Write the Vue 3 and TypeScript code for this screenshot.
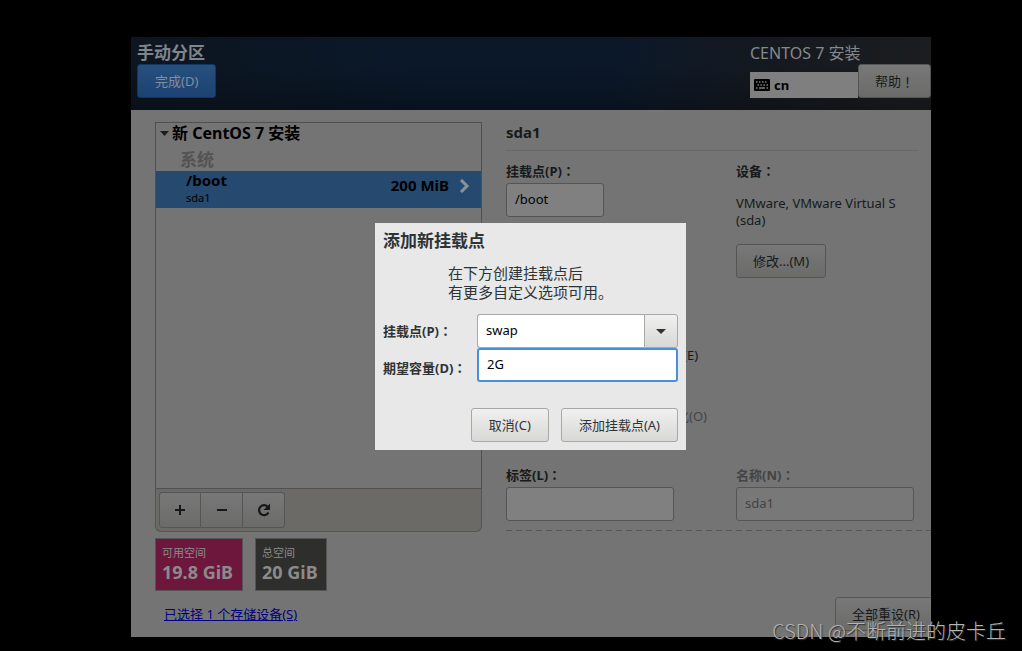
<script setup lang="ts">
import { ref } from 'vue'

const mountPoint = ref('/boot')
const capacity = ref('200 MiB')
const label = ref('')
const deviceName = ref('sda1')
const newMount = ref('swap')
const newSize = ref('2G')

const spaces = [
  { title: '可用空间', value: '19.8 GiB', kind: 'free' },
  { title: '总空间', value: '20 GiB', kind: 'total' },
]
</script>

<template>
  <div class="screen">
    <main class="installer">
      <header class="top">
        <div class="top-left">
          <h1>手动分区</h1>
          <button class="done" type="button">完成(D)</button>
        </div>
        <div class="top-right">
          <div class="product">CENTOS 7 安装</div>
          <div class="top-tools">
            <div class="keyboard">
              <svg width="16" height="12" viewBox="0 0 16 12" aria-hidden="true">
                <rect width="16" height="12" rx="1" fill="#000" />
                <path d="M2 3h1.500M5 3h1.500M8 3h1.500M11 3h1.500M3.500 6h1.500M6.500 6h1.500M9.500 6h1.500M12.500 6h1.500M2 9h1.500M5 9h6M12.500 9h1.500" stroke="#7f7f7f" stroke-width="1.500" />
              </svg>
              <span>cn</span>
            </div>
            <button class="btn help" type="button">帮助<span class="mark">！</span></button>
          </div>
        </div>
      </header>

      <div class="body">
        <section class="left">
          <div class="tree">
            <div class="root">
              <svg width="9" height="5" viewBox="0 0 9 5" aria-hidden="true"><path d="M0 0h9L4.500 5z" fill="#1b1e1f" /></svg>
              <span>新 CentOS 7 安装</span>
            </div>
            <div class="group">系统</div>
            <div class="item">
              <div class="item-name">
                <strong>/boot</strong>
                <small>sda1</small>
              </div>
              <strong class="size">200 MiB</strong>
              <svg width="11" height="14" viewBox="0 0 11 14" aria-hidden="true"><path d="M2 1l6 6-6 6" fill="none" stroke="#8a9299" stroke-width="3" /></svg>
            </div>
          </div>
          <div class="toolbar">
            <button class="btn tool" type="button" aria-label="添加">
              <svg width="16" height="16" viewBox="0 0 16 16"><path d="M8 3v10M3 8h10" stroke="#15191a" stroke-width="2" /></svg>
            </button>
            <button class="btn tool" type="button" aria-label="删除">
              <svg width="16" height="16" viewBox="0 0 16 16"><path d="M3 8h10" stroke="#15191a" stroke-width="2" /></svg>
            </button>
            <button class="btn tool" type="button" aria-label="刷新">
              <svg width="16" height="16" viewBox="0 0 16 16"><path d="M11.500 4.500A5 5 0 1 0 12.500 10.500" fill="none" stroke="#15191a" stroke-width="2.200" /><path d="M14 1.500V8H7.500z" fill="#15191a" /></svg>
            </button>
          </div>
          <div class="spaces">
            <div v-for="s in spaces" :key="s.kind" class="space" :class="s.kind">
              <span>{{ s.title }}</span>
              <strong>{{ s.value }}</strong>
            </div>
          </div>
          <a class="devices" href="#">已选择 1 个存储设备(S)</a>
        </section>

        <section class="right">
          <h2>sda1</h2>
          <div class="columns">
            <div class="stack">
              <div class="field">
                <label for="mount">挂载点(P)<span class="mark">：</span></label>
                <input id="mount" v-model="mountPoint" class="short" type="text" />
              </div>
              <div class="field">
                <label for="capacity">期望容量(D)<span class="mark">：</span></label>
                <input id="capacity" v-model="capacity" class="short" type="text" />
              </div>
            </div>
            <div class="device">
              <div class="caption">设备<span class="mark">：</span></div>
              <p>VMware, VMware Virtual S<br />(sda)</p>
              <button class="btn modify" type="button">修改...(M)</button>
            </div>
          </div>
          <div class="stack types">
            <div class="field">
              <label for="type">设备类型(T)<span class="mark">：</span></label>
              <div class="line">
                <select id="type" class="type"><option>标准分区</option></select>
                <label class="check"><input type="checkbox" />加密(E)</label>
              </div>
            </div>
            <div class="field">
              <label for="fs">文件系统(Y)<span class="mark">：</span></label>
              <div class="line">
                <select id="fs" class="fs"><option>xfs</option></select>
                <label class="check off"><input type="checkbox" disabled />重新格式化(O)</label>
              </div>
            </div>
          </div>
          <div class="columns names">
            <div class="field">
              <label for="label">标签(L)<span class="mark">：</span></label>
              <input id="label" v-model="label" class="wide" type="text" />
            </div>
            <div class="field off">
              <label for="name">名称(N)<span class="mark">：</span></label>
              <input id="name" v-model="deviceName" class="name" type="text" disabled />
            </div>
          </div>
          <svg class="dashes" height="1" aria-hidden="true"><line x1="0" y1="0.500" x2="100%" y2="0.500" stroke="#565656" stroke-dasharray="6 4" /></svg>
          <button class="btn reset" type="button">全部重设(R)</button>
        </section>
      </div>

      <div class="overlay">
        <form class="dialog" role="dialog" aria-labelledby="dialog-title" @submit.prevent>
          <h2 id="dialog-title">添加新挂载点</h2>
          <p>在下方创建挂载点后<br />有更多自定义选项可用。</p>
          <div class="form">
            <label for="new-mount">挂载点(P)<span class="mark">：</span></label>
            <div class="combo">
              <input id="new-mount" v-model="newMount" type="text" />
              <button class="btn arrow" type="button" aria-label="展开">
                <svg width="10" height="5" viewBox="0 0 10 5"><path d="M0 0h10L5 5z" fill="#2e3436" /></svg>
              </button>
            </div>
            <label class="second" for="new-size">期望容量(D)<span class="mark">：</span></label>
            <input id="new-size" v-model="newSize" class="active" type="text" />
          </div>
          <div class="actions">
            <button class="btn" type="button">取消(C)</button>
            <button class="btn" type="submit">添加挂载点(A)</button>
          </div>
        </form>
      </div>
    </main>
    <div class="watermark">CSDN @不断前进的皮卡丘</div>
  </div>
</template>

<style>
body {
  background: #000;
}
</style>

<style scoped>
.screen,
.screen * {
  box-sizing: border-box;
}
.screen {
  display: flex;
  min-height: 100vh;
  padding: 37px 91px 14px 131px;
  background: #000;
  color: #171a1b;
  font: 13px/17px "Noto Sans", "Noto Sans CJK SC", sans-serif;
}
.mark {
  font-family: "Noto Sans CJK TC", sans-serif;
  line-height: 1;
}
h1,
h2,
p {
  margin: 0;
}
h1,
h2 {
  font-size: 17px;
  line-height: 24px;
}
button,
input,
select {
  font: inherit;
  color: inherit;
  margin: 0;
}
svg {
  display: block;
  flex: none;
}
.installer {
  position: relative;
  display: flex;
  flex: 1;
  flex-direction: column;
  min-width: 0;
  overflow: hidden;
  background: #747474;
}
.top {
  display: flex;
  justify-content: space-between;
  padding: 3px 0 12px 6px;
  background: linear-gradient(to bottom, transparent 40%, #00000040), linear-gradient(to right, #0d1520, #0a1829 35%, #0b182a 60%, #15191f 80%, #1b1d1f);
}
.top h1 {
  padding-top: 2px;
  color: #80858b;
  line-height: 22px;
}
.done {
  height: 34px;
  padding: 0 17px;
  border: 1px solid #123861;
  border-radius: 3px;
  background: linear-gradient(#28507f, #1b4272);
  color: #858e98;
}
.top-right {
  width: 181px;
}
.product {
  color: #85888b;
  font-size: 16px;
  line-height: 24px;
  padding-top: 1px;
}
.top-tools {
  display: flex;
  align-items: flex-end;
  margin-top: -1px;
}
.keyboard {
  display: flex;
  flex: 1;
  align-items: center;
  gap: 4px;
  height: 26px;
  padding: 0 4px;
  background: #7f7f7f;
  color: #000;
  font-weight: bold;
}
.btn {
  display: flex;
  align-items: center;
  justify-content: center;
  height: 34px;
  padding: 0 16px;
  border: 1px solid #555;
  border-radius: 3px;
  background: linear-gradient(#787878, #6b6b6a);
  white-space: nowrap;
}
.help {
  width: 73px;
}
.body {
  display: grid;
  flex: 1;
  grid-template-columns: 327fr 425fr;
  gap: 24px;
  padding: 12px 0 6px 24px;
}
.left,
.right {
  display: flex;
  flex-direction: column;
  min-width: 0;
}
.tree {
  flex: 1;
  border: 1px solid #505050;
  background: #747474;
  color: #000;
}
.root {
  display: flex;
  align-items: center;
  gap: 3px;
  height: 20px;
  padding-left: 4px;
  font-size: 16px;
  font-weight: bold;
}
.group {
  height: 28px;
  padding-left: 24px;
  color: #535353;
  font-size: 17px;
  font-weight: bold;
  line-height: 34px;
}
.item {
  display: flex;
  align-items: flex-start;
  height: 37px;
  padding: 1px 11px 0 30px;
  background: #25496f;
}
.item svg {
  margin-top: 7px;
}
.item strong {
  font-size: 15px;
}
.item-name {
  display: flex;
  flex: 1;
  flex-direction: column;
}
.item small {
  font-size: 11px;
}
.item .size {
  line-height: 26px;
  margin-right: 10px;
}
.toolbar {
  display: flex;
  height: 43px;
  padding: 3px;
  border: 1px solid #555;
  border-top: 0;
  border-radius: 0 0 6px 6px;
  background: #6b6a67;
}
.tool {
  width: 42px;
  height: 36px;
  padding: 0;
  border-radius: 0;
}
.tool + .tool {
  border-left: 0;
}
.tool:first-child {
  border-radius: 3px 0 0 3px;
}
.tool:last-child {
  border-radius: 0 3px 3px 0;
}
.spaces {
  display: flex;
  gap: 12px;
  margin-top: 6px;
}
.space {
  display: flex;
  flex-direction: column;
  height: 53px;
  padding: 5px 6px 0;
  border: 1px solid #555;
  color: #8b8b8b;
}
.space span {
  font-size: 11px;
}
.space strong {
  font-size: 18px;
  line-height: 22px;
}
.free {
  min-width: 88px;
  background: #6e173d;
}
.total {
  min-width: 72px;
  background: #2e2e2c;
}
.devices {
  align-self: flex-start;
  margin: 15px 0 8px 9px;
  color: #000080;
}
.right h2 {
  margin-right: 13px;
  height: 29px;
  padding-bottom: 5px;
  border-bottom: 1px solid #686868;
  font-size: 15px;
  line-height: 20px;
}
.columns {
  display: grid;
  grid-template-columns: 230px 1fr;
  margin-top: 8px;
}
.stack {
  display: flex;
  flex-direction: column;
  gap: 3px;
}
.types {
  margin-top: 36px;
}
.names {
  margin-top: 30px;
}
.field > label,
.caption {
  display: block;
  font-weight: bold;
  line-height: 24px;
}
input[type="text"],
select {
  display: block;
  height: 34px;
  padding: 0 8px 2px;
  border: 1px solid #555;
  border-radius: 3px;
  outline: 0;
  background: #808080;
  color: #000;
}
.short {
  width: 98px;
}
.wide {
  width: 168px;
}
input.name {
  width: 178px;
}
.off,
input.name:disabled {
  color: #444;
}
input.name:disabled {
  background: #787878;
}
.device p {
  margin: 12px 0 15px;
}
.line {
  display: flex;
  gap: 10px;
}
.type {
  width: 121px;
}
.fs {
  width: 88px;
}
.check {
  display: flex;
  align-items: center;
  gap: 6px;
}
.check input {
  width: 14px;
  height: 14px;
}
.dashes {
  width: 100%;
  margin-top: 9px;
}
.reset {
  align-self: flex-end;
  margin: auto -6px 0 0;
}
.overlay {
  position: absolute;
  inset: 0 1px 1px 0;
  display: grid;
  place-items: center;
}
.dialog {
  width: 311px;
  padding: 6px 8px 8px;
  background: #e8e8e8;
  color: #2e3436;
}
.dialog p {
  width: 165px;
  margin: 11px auto 12px;
  font-size: 15px;
  line-height: 19px;
}
.form {
  display: grid;
  grid-template-columns: 94px 1fr;
  align-items: center;
}
.form label {
  font-weight: bold;
  white-space: nowrap;
}
.form .second {
  align-self: end;
  line-height: 28px;
}
.form input {
  width: 100%;
  min-width: 0;
  border-color: #a8a8a5;
  background: #fff;
}
.combo {
  display: flex;
}
.combo input {
  border-right: 0;
  border-radius: 3px 0 0 3px;
}
.combo .arrow {
  width: 34px;
  flex: none;
  padding: 0;
  border-radius: 0 3px 3px 0;
}
.form .active {
  border: 2px solid #4a90d9;
}
.dialog .btn {
  border-color: #a8a8a5;
  background: linear-gradient(#f0f0f0, #d8d8d6);
}
.actions {
  display: flex;
  justify-content: flex-end;
  gap: 12px;
  margin-top: 26px;
}
.actions .btn {
  padding: 0 17px;
}
.watermark {
  position: absolute;
  right: 16px;
  bottom: 6px;
  color: #b4b4b4;
  font: 300 20px/28px "Noto Sans CJK SC", sans-serif;
  text-shadow: 1px 1px 1px #333;
}
</style>
